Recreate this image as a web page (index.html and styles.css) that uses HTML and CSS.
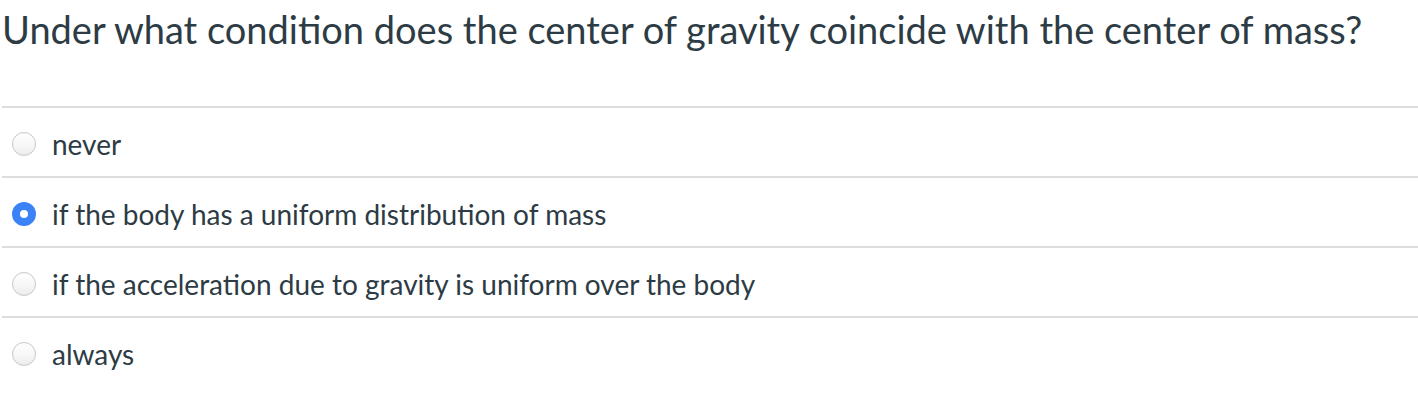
FILE: index.html
```html
<!DOCTYPE html>
<html>
<head>
<meta charset="utf-8">
<link rel="stylesheet" href="styles.css">
</head>
<body>
<div class="quiz">
  <h1 class="question">Under what condition does the center of gravity coincide with the center of mass?</h1>
  <div class="answers">
    <label class="answer"><span class="radio"></span><span class="text">never</span></label>
    <label class="answer"><span class="radio checked"></span><span class="text">if the body has a uniform distribution of mass</span></label>
    <label class="answer"><span class="radio"></span><span class="text">if the acceleration due to gravity is uniform over the body</span></label>
    <label class="answer"><span class="radio"></span><span class="text">always</span></label>
  </div>
</div>
</body>
</html>
```
FILE: styles.css
```css
html, body {
  margin: 0;
  padding: 0;
  background: #ffffff;
}
.quiz {
  padding: 0 0 0 2px;
  font-family: Lato, "Liberation Sans", sans-serif;
  color: #2d3b45;
}
.question {
  margin: 0;
  padding: 6px 0 0 0;
  height: 106px;
  box-sizing: border-box;
  font-size: 38px;
  font-weight: 400;
  line-height: 46px;
}
.answers {
  display: flex;
  flex-direction: column;
}
.answer {
  display: flex;
  align-items: center;
  gap: 16px;
  height: 70px;
  box-sizing: border-box;
  border-top: 2px solid #dddddd;
  padding: 4px 0 0 10px;
}
.radio {
  width: 24px;
  height: 24px;
  box-sizing: border-box;
  border-radius: 50%;
  border: 1px solid #c7c7c7;
  background: linear-gradient(180deg, #ffffff 0%, #f6f6f6 60%, #ececec 100%);
  flex: none;
}
.radio.checked {
  border: 8px solid #3b82f6;
  background: #ffffff;
}
.text {
  font-size: 28px;
  line-height: 34px;
}
```
